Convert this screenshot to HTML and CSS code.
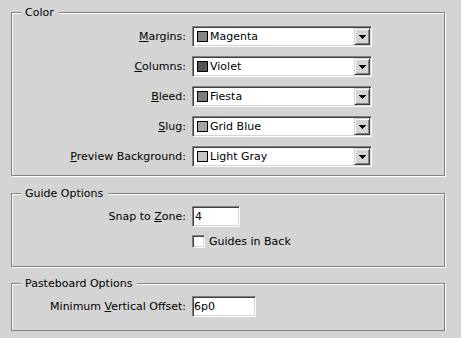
FILE: index.html
```html
<!DOCTYPE html>
<html>
<head>
    <title>Guides &amp; Pasteboard</title>
    <link rel="stylesheet" href="styles.css">
</head>
<body>
    <div class="dialog">
        <div class="group group-color">
            <div class="group-title">Color</div>
            <div class="rows">
                <label class="field-label"><u>M</u>argins:</label>
                <div class="dropdown">
                    <span class="swatch swatch-magenta"></span>
                    <span class="dropdown-text">Magenta</span>
                    <span class="dropdown-btn"><svg width="7" height="4" viewBox="0 0 7 4" shape-rendering="crispEdges"><polygon points="0,0 7,0 3.5,4" fill="#000"/></svg></span>
                </div>

                <label class="field-label"><u>C</u>olumns:</label>
                <div class="dropdown">
                    <span class="swatch swatch-violet"></span>
                    <span class="dropdown-text">Violet</span>
                    <span class="dropdown-btn"><svg width="7" height="4" viewBox="0 0 7 4" shape-rendering="crispEdges"><polygon points="0,0 7,0 3.5,4" fill="#000"/></svg></span>
                </div>

                <label class="field-label"><u>B</u>leed:</label>
                <div class="dropdown">
                    <span class="swatch swatch-fiesta"></span>
                    <span class="dropdown-text">Fiesta</span>
                    <span class="dropdown-btn"><svg width="7" height="4" viewBox="0 0 7 4" shape-rendering="crispEdges"><polygon points="0,0 7,0 3.5,4" fill="#000"/></svg></span>
                </div>

                <label class="field-label"><u>S</u>lug:</label>
                <div class="dropdown">
                    <span class="swatch swatch-gridblue"></span>
                    <span class="dropdown-text">Grid Blue</span>
                    <span class="dropdown-btn"><svg width="7" height="4" viewBox="0 0 7 4" shape-rendering="crispEdges"><polygon points="0,0 7,0 3.5,4" fill="#000"/></svg></span>
                </div>

                <label class="field-label"><u>P</u>review Background:</label>
                <div class="dropdown">
                    <span class="swatch swatch-lightgray"></span>
                    <span class="dropdown-text">Light Gray</span>
                    <span class="dropdown-btn"><svg width="7" height="4" viewBox="0 0 7 4" shape-rendering="crispEdges"><polygon points="0,0 7,0 3.5,4" fill="#000"/></svg></span>
                </div>
            </div>
        </div>

        <div class="group group-guides">
            <div class="group-title">Guide Options</div>
            <div class="rows">
                <label class="field-label" for="zone">Snap to <u>Z</u>one:</label>
                <input type="text" id="zone" class="textbox textbox-short" value="4">

                <label class="check">
                    <input type="checkbox" class="checkbox">
                    <span>Guides in Back</span>
                </label>
            </div>
        </div>

        <div class="group group-pasteboard">
            <div class="group-title">Pasteboard Options</div>
            <div class="rows">
                <label class="field-label" for="offset">Minimum <u>V</u>ertical Offset:</label>
                <input type="text" id="offset" class="textbox textbox-mid" value="6p0">
            </div>
        </div>
    </div>
</body>
</html>
```

FILE: styles.css
```css
body {
    margin: 0;
    background: #d4d4d4;
    font-family: "DejaVu Sans", Verdana, sans-serif;
    font-size: 11px;
    line-height: 13px;
    color: #000;
}
.dialog {
    padding: 12px 16px 0 11px;
}
.group {
    border: 1px solid #808080;
    box-shadow: inset 1px 1px 0 #fff, 1px 1px 0 #fff;
}
.group-guides {
    margin-top: 17px;
}
.group-pasteboard {
    margin-top: 16px;
}
.group-title {
    width: fit-content;
    margin: -7px 0 0 9px;
    padding: 0 5px 0 4px;
    background: #d4d4d4;
}
.rows {
    display: grid;
    grid-template-columns: 174px auto;
    column-gap: 6px;
    align-items: center;
}
.group-color .rows {
    row-gap: 9px;
    margin-top: 7px;
    padding-bottom: 8px;
}
.group-guides .rows {
    row-gap: 8px;
    margin-top: 6px;
    padding-bottom: 18px;
}
.group-pasteboard .rows {
    margin-top: 6px;
    padding-bottom: 13px;
}
.field-label {
    justify-self: end;
    white-space: nowrap;
}
.dropdown {
    width: 180px;
    height: 21px;
    box-sizing: border-box;
    padding: 1px;
    border: 1px solid;
    border-color: #808080 #fff #fff #808080;
    box-shadow: inset 1px 1px 0 #404040, inset -1px -1px 0 #d4d4d4;
    background: #fff;
    display: flex;
    align-items: center;
}
.swatch {
    width: 11px;
    height: 11px;
    box-sizing: border-box;
    border: 1px solid #000;
    margin: 0 2px 0 3px;
    flex: none;
}
.swatch-magenta { background: #858585; }
.swatch-violet { background: #555; }
.swatch-fiesta { background: #7c7c7c; }
.swatch-gridblue { background: #a6a6a6; }
.swatch-lightgray { background: #c4c4c4; }
.dropdown-text {
    white-space: nowrap;
}
.dropdown-btn {
    width: 16px;
    height: 17px;
    box-sizing: border-box;
    margin-left: auto;
    background: #d4d4d4;
    border: 1px solid;
    border-color: #d4d4d4 #404040 #404040 #d4d4d4;
    box-shadow: inset 1px 1px 0 #fff, inset -1px -1px 0 #808080;
    display: flex;
    align-items: center;
    justify-content: center;
}
.dropdown-btn svg {
    display: block;
}
.textbox {
    height: 21px;
    box-sizing: border-box;
    margin: 0;
    padding: 0 1px;
    border: 1px solid;
    border-color: #808080 #fff #fff #808080;
    box-shadow: inset 1px 1px 0 #404040, inset -1px -1px 0 #d4d4d4;
    background: #fff;
    font: inherit;
    color: #000;
    outline: none;
}
.textbox-short { width: 48px; padding-left: 2px; }
.textbox-mid { width: 64px; }
.check {
    grid-column: 2;
    display: flex;
    align-items: center;
    gap: 4px;
}
.checkbox {
    appearance: none;
    width: 13px;
    height: 13px;
    margin: 0;
    box-sizing: border-box;
    border: 1px solid;
    border-color: #808080 #fff #fff #808080;
    box-shadow: inset 1px 1px 0 #404040, inset -1px -1px 0 #d4d4d4;
    background: #fff;
}
```
